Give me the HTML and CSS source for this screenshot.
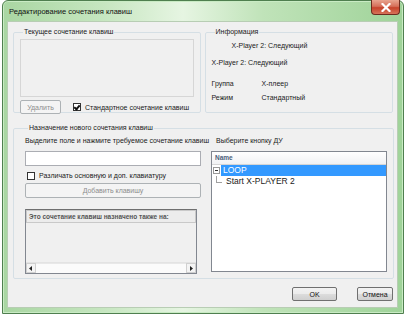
FILE: index.html
```html
<!DOCTYPE html>
<html lang="ru">
<head>
    <meta charset="UTF-8">
    <title>Редактирование сочетания клавиш</title>
    <link rel="stylesheet" href="styles.css">
</head>
<body>
    <div class="window">
        <div class="titlebar">
            <span class="title">Редактирование сочетания клавиш</span>
            <span class="close">
                <svg width="10" height="9" viewBox="0 0 10 9">
                    <path d="M1.5 1 L8.5 8 M8.5 1 L1.5 8" stroke="#fff" stroke-width="2.2" stroke-linecap="square"/>
                </svg>
            </span>
        </div>
        <div class="client">
            <div class="top-row">
                <fieldset class="group g-current">
                    <legend>Текущее сочетание клавиш</legend>
                    <div class="keybox"></div>
                    <div class="row">
                        <span class="btn disabled btn-del">Удалить</span>
                        <span class="check"><span class="box checked"></span>Стандартное сочетание клавиш</span>
                    </div>
                </fieldset>
                <fieldset class="group g-info">
                    <legend>Информация</legend>
                    <div class="info-title">X-Player 2: Следующий</div>
                    <div class="info-name">X-Player 2: Следующий</div>
                    <div class="info-grid">
                        <span>Группа</span><span>X-плеер</span>
                        <span>Режим</span><span>Стандартный</span>
                    </div>
                </fieldset>
            </div>
            <fieldset class="group g-new">
                <legend>Назначение нового сочетания клавиш</legend>
                <div class="cols">
                    <div class="col-left">
                        <div class="hint">Выделите поле и нажмите требуемое сочетание клавиш</div>
                        <div class="keyinput"></div>
                        <span class="check check-num"><span class="box"></span>Различать основную и доп. клавиатуру</span>
                        <span class="btn disabled btn-add">Добавить клавишу</span>
                        <div class="listview">
                            <div class="lv-head">Это сочетание клавиш назначено также на:</div>
                            <div class="lv-body"></div>
                            <div class="hscroll">
                                <span class="arrow">
                                    <svg width="4" height="5" viewBox="0 0 4 5"><path d="M3 0 L0 2.5 L3 5 Z" fill="#222"/></svg>
                                </span>
                                <span class="track"></span>
                                <span class="arrow">
                                    <svg width="4" height="5" viewBox="0 0 4 5"><path d="M1 0 L4 2.5 L1 5 Z" fill="#222"/></svg>
                                </span>
                            </div>
                        </div>
                    </div>
                    <div class="col-right">
                        <div class="hint hint-r">Выберите кнопку ДУ</div>
                        <div class="tree">
                            <div class="tree-head">Name</div>
                            <div class="tree-row">
                                <span class="expander">
                                    <svg width="7" height="7" viewBox="0 0 7 7"><rect x="0.5" y="0.5" width="6" height="6" fill="#fff" stroke="#999"/><path d="M2 3.5 H5" stroke="#333"/></svg>
                                </span>
                                <span class="node selected">LOOP</span>
                            </div>
                            <div class="tree-row child">
                                <span class="branch"></span>
                                <span class="node">Start X-PLAYER 2</span>
                            </div>
                        </div>
                    </div>
                </div>
            </fieldset>
            <div class="footer">
                <span class="btn btn-ok">OK</span>
                <span class="btn btn-cancel">Отмена</span>
            </div>
        </div>
    </div>
</body>
</html>
```

FILE: styles.css
```css
body{
    margin:0;
    background:#fff;
    font-family:"Liberation Sans", Arial, sans-serif;
    font-size:7px;
    color:#1a1a1a;
    white-space:nowrap;
}
.window{
    margin-left:2px;
    width:402px;
    height:314px;
    box-sizing:border-box;
    border:1px solid #4f7f4f;
    border-radius:6px 6px 0 0;
    padding:0 5px 5px 4px;
    background:linear-gradient(90deg,#a9d6a2 0%,#c6e6c0 25%,#e6f5e2 45%,#c0e3b9 65%,#9fd399 100%);
    box-shadow:inset 0 0 0 1px #c9ebc4;
}
.titlebar{
    height:20px;
    display:flex;
    align-items:flex-start;
    justify-content:space-between;
}
.title{
    margin-top:6px;
    margin-left:2px;
    font-size:7.5px;
    color:#111;
}
.close{
    width:29px;
    height:15px;
    margin-top:-1px;
    margin-right:-2px;
    box-sizing:border-box;
    border:1px solid #6d2b1e;
    border-top:none;
    border-radius:0 0 4px 4px;
    background:linear-gradient(180deg,#e8a48f 0%,#d6705a 45%,#c7432b 55%,#d6745a 100%);
    display:flex;
    align-items:center;
    justify-content:center;
}
.client{
    height:287px;
    box-sizing:border-box;
    background:#f0f0f0;
    border:1px solid #b8cdb4;
    padding:5px 4px 0 5px;
}
.top-row{
    display:flex;
    gap:4px;
}
.group{
    margin:0;
    padding:0 6px;
    border:1px solid #d5dfe5;
    border-radius:2px;
    box-sizing:border-box;
    min-width:0;
}
.group legend{
    padding:0 1px;
    margin-left:3px;
    line-height:10px;
    color:#1a1a1a;
}
.g-current{
    width:188px;
    height:86px;
    padding:2px 6px 0 6px;
}
.keybox{
    height:56px;
    border:1px solid #d6d6d6;
    background:#f0f0f0;
}
.row{
    display:flex;
    align-items:center;
    margin-top:3px;
}
.btn{
    display:flex;
    align-items:center;
    justify-content:center;
    box-sizing:border-box;
    height:14px;
    border:1px solid #707070;
    border-radius:2px;
    background:linear-gradient(180deg,#f3f3f3 0%,#ebebeb 50%,#dcdcdc 51%,#cfcfcf 100%);
    color:#111;
}
.btn.disabled{
    border-color:#adb2b5;
    background:#f4f4f4;
    color:#8d8d8d;
}
.btn-del{
    width:41px;
}
.check{
    display:flex;
    align-items:center;
    gap:4px;
}
.row .check{
    margin-left:12px;
}
.box{
    width:8px;
    height:8px;
    box-sizing:border-box;
    border:1px solid #333;
    background:#fff;
    position:relative;
}
.box.checked::after{
    content:"";
    position:absolute;
    left:1px;
    top:0;
    width:2px;
    height:4px;
    border:solid #111;
    border-width:0 2px 2px 0;
    transform:rotate(40deg);
}
.g-info{
    width:189px;
    height:86px;
    padding:4px 6px 0 6px;
}
.info-title{
    margin-left:20px;
    line-height:10px;
}
.info-name{
    margin-top:7px;
    line-height:10px;
}
.info-grid{
    margin-top:11px;
    display:grid;
    grid-template-columns:50px auto;
    row-gap:4px;
    line-height:10px;
}
.g-new{
    margin-top:10px;
    width:381px;
    height:156px;
    padding:3px 6px 0 11px;
}
.cols{
    display:flex;
    gap:10px;
}
.col-left{
    width:176px;
    display:flex;
    flex-direction:column;
}
.hint{
    line-height:10px;
}
.keyinput{
    margin-top:5px;
    height:15px;
    box-sizing:border-box;
    border:1px solid #abadb3;
    background:#fff;
}
.check-num{
    margin-top:5px;
    margin-left:2px;
    line-height:10px;
}
.btn-add{
    margin-top:2px;
    height:15px;
}
.listview{
    margin-top:11px;
    width:172px;
    height:65px;
    box-sizing:border-box;
    border:1px solid #828790;
    border-top-color:#6f6f6f;
    display:flex;
    flex-direction:column;
    background:#f0f0f0;
}
.lv-head{
    height:11px;
    line-height:11px;
    padding-left:2px;
    border:1px solid #c9c9c9;
    background:#ececec;
    color:#555;
    font-size:6.5px;
    font-weight:bold;
}
.lv-body{
    flex:1;
}
.hscroll{
    height:10px;
    display:flex;
    border-top:1px solid #e3e3e3;
}
.arrow{
    width:10px;
    display:flex;
    align-items:center;
    justify-content:center;
    background:#f4f4f4;
    border:1px solid #d0d0d0;
    box-sizing:border-box;
}
.track{
    flex:1;
    background:#fbfbfb;
    border-top:1px solid #e8e8e8;
}
.col-right{
    width:176px;
    display:flex;
    flex-direction:column;
}
.hint-r{
    margin-left:5px;
}
.tree{
    margin-top:5px;
    height:121px;
    box-sizing:border-box;
    border:1px solid #828790;
    background:#fff;
}
.tree-head{
    height:12px;
    line-height:12px;
    padding-left:3px;
    border-bottom:1px solid #d5d5d5;
    background:linear-gradient(180deg,#fff 0%,#f1f2f4 100%);
    color:#4c607a;
    font-size:6.5px;
    font-weight:bold;
}
.tree-row{
    display:flex;
    align-items:center;
    height:11px;
    font-size:8.5px;
}
.expander{
    width:9px;
    display:flex;
    justify-content:center;
}
.node{
    padding:0 2px;
    line-height:11px;
}
.node.selected{
    flex:1;
    background:#3399ff;
    color:#fff;
}
.branch{
    width:5px;
    height:6px;
    margin:0 2px 5px 4px;
    border-left:1px solid #a0a0a0;
    border-bottom:1px solid #a0a0a0;
}
.footer{
    display:flex;
    justify-content:flex-end;
    gap:20px;
    margin-top:8px;
    padding-right:0;
}
.btn-ok{
    width:45px;
}
.btn-cancel{
    width:36px;
}
```
